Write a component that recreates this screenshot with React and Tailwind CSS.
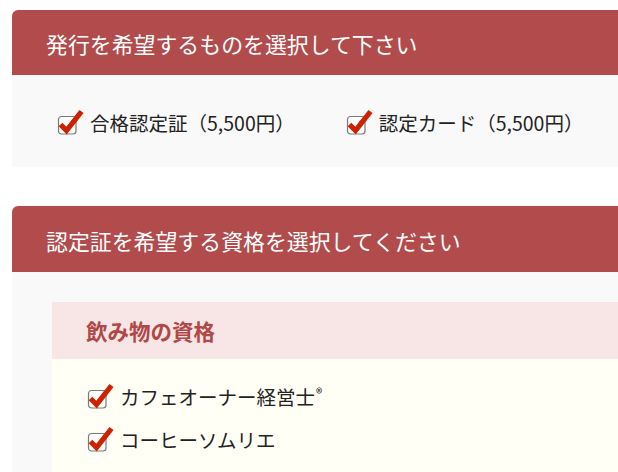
import React from "react";

function Check({ checked = true }) {
  return (
    <svg width="28" height="28" viewBox="0 0 28 28" className="shrink-0">
      <rect x="2.5" y="7.5" width="17.5" height="17.5" rx="3" fill="#fff" stroke="#7a7a7a" strokeWidth="1.2" />
      {checked && (
        <polyline points="4.5,15.5 10.5,21.5 25.5,2.5" fill="none" stroke="#cc2200" strokeWidth="5.2" strokeLinejoin="miter" />
      )}
    </svg>
  );
}

function Item({ children, checked = true }) {
  return (
    <div className="flex items-center gap-[6px]">
      <Check checked={checked} />
      <span className="text-[19.5px] text-[#222]">{children}</span>
    </div>
  );
}

export default function App() {
  return (
    <div className="w-[618px] h-[472px] overflow-hidden bg-white font-['Noto_Sans_CJK_JP','Noto_Sans',sans-serif]">
      <div className="ml-3 pt-[10px] w-[640px]">
        <div className="rounded-tl-md bg-[#b24c4c] h-[65px] flex items-center pl-[34px] text-white text-[21.9px] pt-[4px]">
          発行を希望するものを選択して下さい
        </div>
        <div className="bg-[#f9f9f9] h-[92px] flex items-center pl-[44px] gap-[50px] pt-[3px]">
          <Item>合格認定証（5,500円）</Item>
          <Item>認定カード（5,500円）</Item>
        </div>
      </div>
      <div className="ml-3 mt-[39px] w-[640px]">
        <div className="rounded-tl-md bg-[#b24c4c] h-[66px] flex items-center pl-[34px] text-white text-[21.9px] pt-[4px]">
          認定証を希望する資格を選択してください
        </div>
        <div className="bg-[#f9f9f9] pt-[30px] pl-[40px]">
          <div className="bg-[#f8e6e6] h-[57px] flex items-center pl-[34px] text-[#b04848] font-bold text-[21.5px] pt-[2px]">
            飲み物の資格
          </div>
          <div className="bg-[#fffff5] pl-[34px] pt-[23px] flex flex-col gap-[14px] h-[200px]">
            <Item>
              カフェオーナー経営士
              <span className="text-[13px] relative -top-[7px] ml-[1px]">®</span>
            </Item>
            <Item>コーヒーソムリエ</Item>
            <Item checked={false}>紅茶ソムリエ</Item>
          </div>
        </div>
      </div>
    </div>
  );
}
